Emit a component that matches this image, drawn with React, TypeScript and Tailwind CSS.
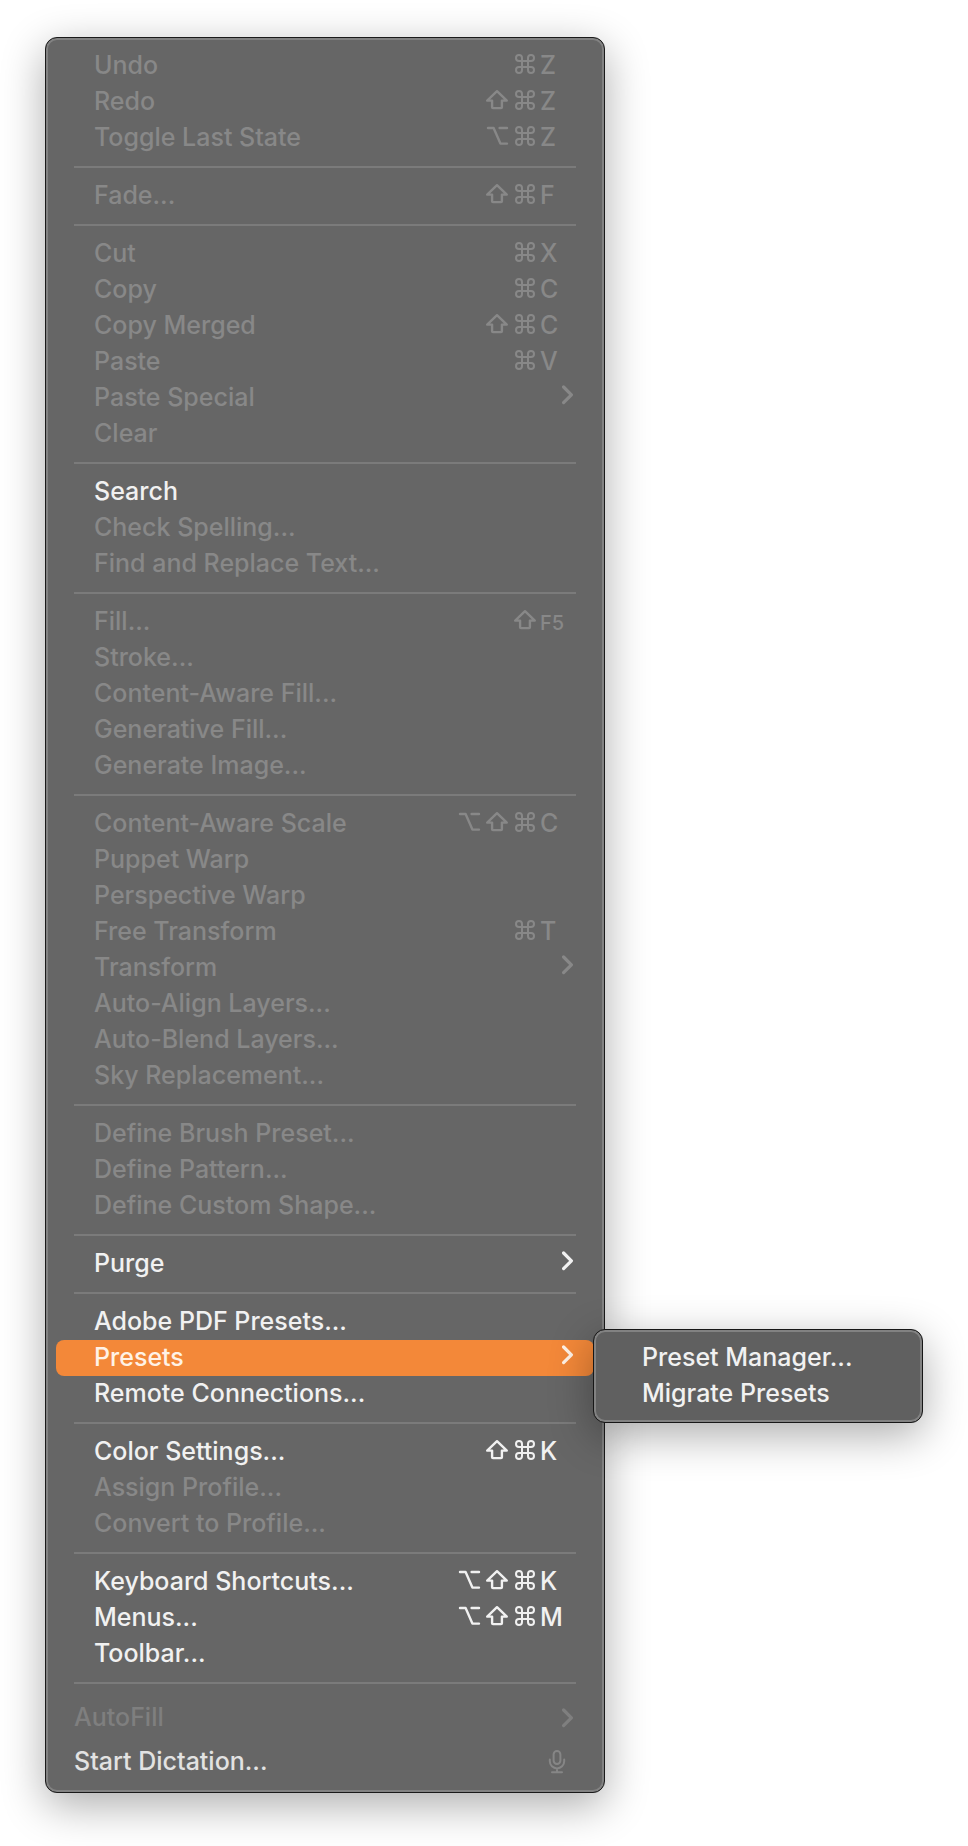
// src/App.tsx
// Edit menu with the Presets submenu open.
import { Fragment } from 'react';
import clsx from 'clsx';

interface MenuEntry {
    label: string;
    keys?: string;
    enabled?: boolean;
    arrow?: boolean;
    submenu?: MenuEntry[];
}

const EDIT_MENU: MenuEntry[][] = [
    [
        { label: 'Undo', keys: '⌘ Z' },
        { label: 'Redo', keys: '⇧ ⌘ Z' },
        { label: 'Toggle Last State', keys: '⌥ ⌘ Z' },
    ],
    [{ label: 'Fade...', keys: '⇧ ⌘ F' }],
    [
        { label: 'Cut', keys: '⌘ X' },
        { label: 'Copy', keys: '⌘ C' },
        { label: 'Copy Merged', keys: '⇧ ⌘ C' },
        { label: 'Paste', keys: '⌘ V' },
        { label: 'Paste Special', arrow: true },
        { label: 'Clear' },
    ],
    [
        { label: 'Search', enabled: true },
        { label: 'Check Spelling...' },
        { label: 'Find and Replace Text...' },
    ],
    [
        { label: 'Fill...', keys: '⇧ F5' },
        { label: 'Stroke...' },
        { label: 'Content-Aware Fill...' },
        { label: 'Generative Fill...' },
        { label: 'Generate Image...' },
    ],
    [
        { label: 'Content-Aware Scale', keys: '⌥ ⇧ ⌘ C' },
        { label: 'Puppet Warp' },
        { label: 'Perspective Warp' },
        { label: 'Free Transform', keys: '⌘ T' },
        { label: 'Transform', arrow: true },
        { label: 'Auto-Align Layers...' },
        { label: 'Auto-Blend Layers...' },
        { label: 'Sky Replacement...' },
    ],
    [
        { label: 'Define Brush Preset...' },
        { label: 'Define Pattern...' },
        { label: 'Define Custom Shape...' },
    ],
    [{ label: 'Purge', enabled: true, arrow: true }],
    [
        { label: 'Adobe PDF Presets...', enabled: true },
        {
            label: 'Presets',
            enabled: true,
            arrow: true,
            submenu: [
                { label: 'Preset Manager...', enabled: true },
                { label: 'Migrate Presets', enabled: true },
            ],
        },
        { label: 'Remote Connections...', enabled: true },
    ],
    [
        { label: 'Color Settings...', keys: '⇧ ⌘ K', enabled: true },
        { label: 'Assign Profile...' },
        { label: 'Convert to Profile...' },
    ],
    [
        { label: 'Keyboard Shortcuts...', keys: '⌥ ⇧ ⌘ K', enabled: true },
        { label: 'Menus...', keys: '⌥ ⇧ ⌘ M', enabled: true },
        { label: 'Toolbar...', enabled: true },
    ],
];

const GLYPHS: Record<string, string> = {
    '⌘': 'M10 8.8V6a3 3 0 1 0-3 3h12a3 3 0 1 0-3-3v12a3 3 0 1 0 3-3H7a3 3 0 1 0 3 3V8.8',
    '⇧': 'M13 3.2 3.2 12.6h4.9v6.6q0 .9.9.9h8q.9 0 .9-.9v-6.6h4.9Z',
    '⌥': 'M4 4h5.6l6.8 15.6H23M15.6 4H23',
};

const Glyph = ({ name }: { name: string }) => (
    <svg viewBox="0 0 28 24" className="h-6 w-7" fill="none" aria-label={name}>
        <path
            d={GLYPHS[name]}
            stroke="currentColor"
            strokeWidth={name === '⌘' ? 2 : 2.4}
            strokeLinecap="round"
            strokeLinejoin="round"
        />
    </svg>
);

const Chevron = () => (
    <svg viewBox="0 0 14 24" className="h-6 w-3.5 shrink-0" fill="none" aria-hidden="true">
        <path
            d="m1.6 4 7.8 7.8-7.8 7.8"
            stroke="currentColor"
            strokeWidth="3.2"
            strokeLinecap="round"
            strokeLinejoin="round"
        />
    </svg>
);

const MicIcon = () => (
    <svg viewBox="0 0 20 26" className="h-[26px] w-5" fill="none" aria-hidden="true">
        <g stroke="currentColor" strokeWidth="2" strokeLinecap="round">
            <rect x="6.6" y="2" width="6.8" height="13" rx="3.4" />
            <path d="M2.8 10.5v1.7a7.2 7.2 0 0 0 14.4 0v-1.7M10 19.6v3.4M5 23.2h10" />
        </g>
    </svg>
);

const Shortcut = ({ keys }: { keys: string }) => (
    <span className="flex pt-1">
        {keys.split(' ').map((key) =>
            GLYPHS[key] ? (
                <Glyph key={key} name={key} />
            ) : (
                <kbd
                    key={key}
                    className={clsx(
                        'w-9 font-[Inter,sans-serif] leading-[26px]',
                        key.length > 1 && 'pt-0.5 text-xl',
                    )}
                >
                    {key}
                </kbd>
            ),
        )}
    </span>
);

const MenuRow = ({ entry, nested }: { entry: MenuEntry; nested?: boolean }) => (
    <li role="none" className="relative">
        <button
            type="button"
            role="menuitem"
            disabled={!entry.enabled}
            aria-haspopup={entry.arrow ? 'menu' : undefined}
            className={clsx(
                'flex h-9 w-full items-start justify-between rounded-lg pr-[18px] text-left',
                nested ? 'pl-10' : 'pl-[38px]',
                entry.enabled ? 'text-[#f1f1f1]' : 'text-[#888888]',
                entry.submenu && 'bg-[#f38839] text-[#fff2e6]',
            )}
        >
            <span className="leading-[34px] whitespace-nowrap">{entry.label}</span>
            {entry.keys && <Shortcut keys={entry.keys} />}
            {entry.arrow && (
                <span className="pt-[3px]">
                    <Chevron />
                </span>
            )}
        </button>
        {entry.submenu && (
            <ul
                role="menu"
                aria-label={entry.label}
                className="absolute -top-[11px] left-full -ml-px w-[330px] rounded-xl border border-[#171717] bg-[#606060] px-2 py-2.5 shadow-[inset_0_0_0_2px_#828282,0_12px_44px_rgba(0,0,0,0.33)]"
            >
                {entry.submenu.map((child) => (
                    <MenuRow key={child.label} entry={child} nested />
                ))}
            </ul>
        )}
    </li>
);

const Separator = () => (
    <li role="separator" className="mx-[18px] my-2.5 h-0.5 bg-[#7b7b7b]" />
);

export default function App() {
    return (
        <main className="bg-white px-[45px] pt-[37px] pb-[53px] font-[Inter,sans-serif] text-[25px] font-medium">
            <ul
                role="menu"
                aria-label="Edit"
                className="w-full max-w-[560px] rounded-xl border border-[#1a1a1a] bg-[#666666] px-2.5 pt-2.5 pb-2 shadow-[inset_0_0_0_2px_#828282,0_12px_44px_rgba(0,0,0,0.33)]"
            >
                {EDIT_MENU.map((group) => (
                    <Fragment key={group[0].label}>
                        {group.map((entry) => (
                            <MenuRow key={entry.label} entry={entry} />
                        ))}
                        <Separator />
                    </Fragment>
                ))}

                {/* System items */}
                <li role="none" className="pt-0.5">
                    <button
                        type="button"
                        role="menuitem"
                        disabled
                        className="flex h-11 w-full items-center justify-between px-[18px] text-[#7f7f7f]"
                    >
                        <span>AutoFill</span>
                        <Chevron />
                    </button>
                </li>
                <li role="none">
                    <button
                        type="button"
                        role="menuitem"
                        className="flex h-11 w-full items-center justify-between pr-[27px] pl-[18px] text-[#e2e2e2]"
                    >
                        <span>Start Dictation...</span>
                        <span className="text-[#868686]">
                            <MicIcon />
                        </span>
                    </button>
                </li>
            </ul>
        </main>
    );
}
